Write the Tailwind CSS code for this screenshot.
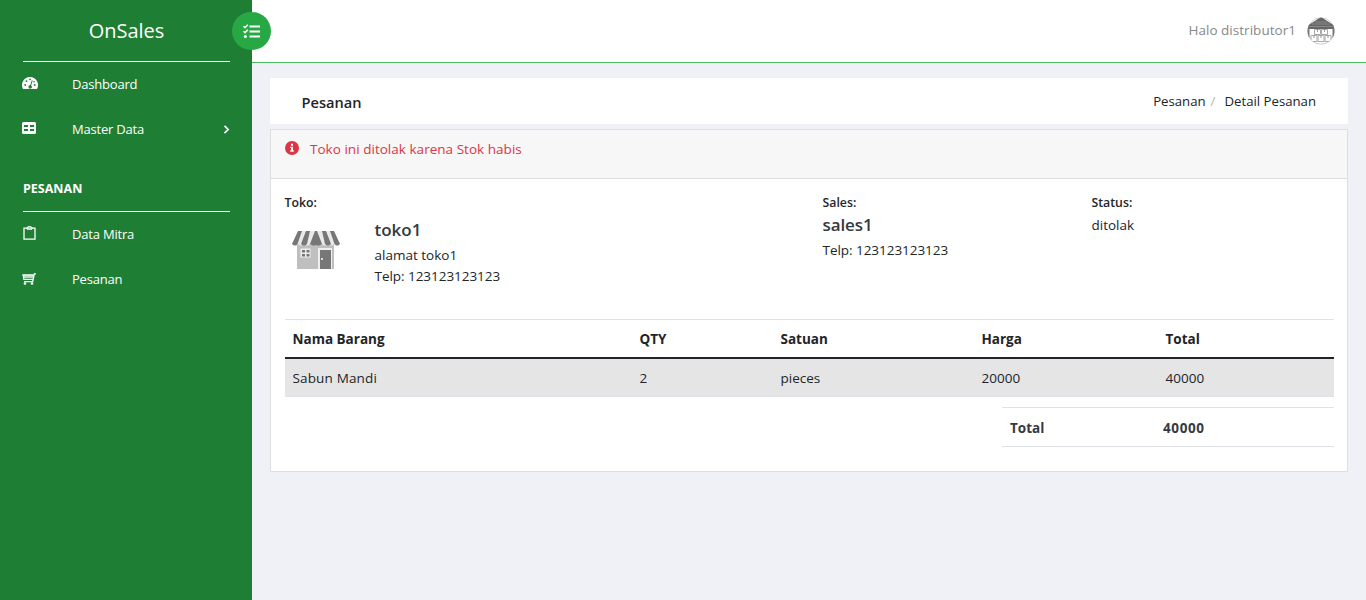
<!DOCTYPE html>
<html lang="id">
<head>
<meta charset="utf-8">
<title>OnSales</title>
<script src="https://cdn.jsdelivr.net/npm/@tailwindcss/browser@4"></script>
</head>
<body class="flex h-[600px] overflow-hidden bg-[#f0f1f7] font-['Open_Sans',sans-serif] text-[#212529]">
<aside class="relative w-[252px] shrink-0 bg-[#1e7e34] px-[23px] text-[13px] tracking-[-0.2px] text-white">
  <div class="mr-[-1px] flex h-[62px] items-center justify-center border-b border-white text-[20px] tracking-normal"><span>OnSales</span></div>
  <button class="absolute left-[232px] top-3 z-10 flex h-[38px] w-[39px] items-center justify-center rounded-full bg-[#28a745]">
    <svg class="mt-px h-[15px] w-[17px]" viewBox="0 0 17 15" fill="none" stroke="#fff" stroke-width="2"><path d="M6.5 2.5H17M6.5 7.5H17M6.5 12.5H17"/><path stroke-width="1.6" d="M.5 2.2 2 3.7 4.8.8M.5 7.2 2 8.7 4.8 5.8"/><circle cx="2.4" cy="12.5" r="1.6" fill="#fff" stroke="none"/></svg>
  </button>
  <nav class="mr-[-1px]">
    <a class="flex h-[45px] items-center"><svg class="mb-[3px] -ml-px mr-[34px] h-3 w-4" viewBox="0 0 16 12"><path fill="#fff" d="M8 0a8 8 0 0 0-7 11.9h14A8 8 0 0 0 8 0Z"/><g fill="#1e7e34"><circle cx="3.2" cy="8" r=".9"/><circle cx="4.5" cy="4.2" r=".9"/><circle cx="8" cy="2.3" r=".9"/><circle cx="12.8" cy="8" r=".9"/><circle cx="12" cy="4.8" r=".8"/><path d="m9.800 3.300.9.300-1.600 5a1.600 1.600 0 1 1-.9-.3z"/></g></svg>Dashboard</a>
    <a class="flex h-[45px] items-center"><svg class="mb-[3px] -ml-px mr-[36px] h-3 w-3.5" viewBox="0 0 14 12"><rect width="14" height="12" rx="1.5" fill="#fff"/><path fill="#1e7e34" d="M2 3h4v2H2zm6 0h4v2H8zM2 7h4v2H2zm6 0h4v2H8z"/></svg>Master Data<svg class="ml-auto h-[9px] w-[7px]" viewBox="0 0 7 9" fill="none" stroke="#fff" stroke-width="1.7"><path d="m1.5.8 3.7 3.7-3.7 3.7"/></svg></a>
    <h2 class="flex h-[60px] items-center border-b border-white pt-[15px] text-[12.5px] font-bold tracking-normal">PESANAN</h2>
    <a class="flex h-[45px] items-center"><svg class="mb-[3px] mr-[36px] h-3.5 w-[13px]" viewBox="0 0 13 14" fill="none" stroke="#fff"><path stroke-width="1.3" d="M1 2.2h11v11H1z"/><path fill="#a9cfb1" d="M4 1.2h1.3a1.2 1.2 0 0 1 2.4 0H9v2H4z"/></svg>Data Mitra</a>
    <a class="flex h-[45px] items-center"><svg class="mb-[2px] -ml-px mr-[36px] h-3 w-3.5" viewBox="0 0 14 12" fill="none" stroke="#fff" stroke-width="1.3"><path fill="#fff" fill-opacity=".7" stroke="none" d="M1 2h10.500v3H1.500z"/><path d="M.3 1.800h11M1.200 2l.7 4.300h9.200M14 .8h-1.700L10.700 8.700H2"/><circle cx="3" cy="10.500" r=".7"/><circle cx="10" cy="10.500" r=".7"/></svg>Pesanan</a>
  </nav>
</aside>
<div class="min-w-0 flex-1">
  <header class="flex h-[63px] items-center justify-end border-b border-[#4cbb63] bg-white pr-[31px] text-[13.5px] text-[#888]">
    <span class="mr-[11px] pb-px tracking-[0.03px]">Halo distributor1</span>
    <svg class="h-7 w-7" viewBox="0 0 28 28"><clipPath id="a"><circle cx="14" cy="14" r="13.5"/></clipPath><circle cx="14" cy="14" r="13.2" fill="#fff" stroke="#aaa" stroke-width=".6"/><g clip-path="url(#a)"><path fill="#666" d="M0 9 14 0l14 9v3H0z"/><path stroke="#999" stroke-width=".7" d="M8 5h12M5 7h18M2 9.5h24"/><path fill="#777" d="M0 11h2.500v10H0zm25.500 0H28v10h-2.500z"/><g fill="#fff" stroke="#aaa"><path d="M7.500 12.500h6v5h-6zM14.500 12.500h6v5h-6zM4 18.500h6v6H4zM11 18.500h6v6h-6zM18 18.500h6v6h-6z"/><path stroke="#888" stroke-width=".8" d="M10.500 12v3M17.500 12v3M7 18v3M14 18v3M21 18v3"/></g></g></svg>
  </header>
  <main class="pl-[18px] pr-[18px] pt-[15px]">
    <div class="flex h-[46px] items-center justify-between bg-white px-8">
      <h1 class="-ml-[0.5px] pt-[3px] text-[14.6px] font-semibold">Pesanan</h1>
      <div class="flex pt-[2px] text-[13.2px]"><span>Pesanan</span><span class="ml-[5px] mr-[9px] text-[#b4b8bc]">/</span><span>Detail Pesanan</span></div>
    </div>
    <section class="mt-[5px] h-[343px] border border-[#dfdfdf] bg-white text-[13.5px]">
      <div class="flex h-[49px] border-b border-[#dfdfdf] bg-[#f7f7f7] pl-[13.5px] pt-[9px] text-[#dc3545]">
        <svg class="mr-[11.5px] mt-[2px] h-3.5 w-3.5" viewBox="0 0 14 14"><circle cx="7" cy="7" r="7" fill="#dc3545"/><path fill="#fff" d="M6 2.800h2v2H6zM5.200 5.700H8v3.600h.8v1.400H5.200V9.300H6V7.100h-.8z"/></svg>
        <span class="tracking-[0.03px]">Toko ini ditolak karena Stok habis</span>
      </div>
      <div class="grid h-[140px] grid-cols-[538px_269px_1fr] pl-[13.5px] pt-[15px] leading-[21px]">
        <div>
          <div class="text-[12.3px] font-semibold leading-[18px]">Toko:</div>
          <div class="flex">
            <svg class="ml-[7px] mt-[19px] h-10 w-12" viewBox="0 0 48 40"><path fill="#bfbfbf" d="M5 12h37v26H5z"/><path fill="#e9e9e9" d="M7 0h34l7 13q-3 3-6 0-3 3-6 0-3 3-6 0-3 3-6 0-3 3-6 0-3 3-6 0-3 3-6 0-3 3-6 0z"/><g fill="#777"><path d="M6 0h4L5.500 13q-2 3-5.500 0zM14 0h4l-3 13q-3 3-6 0zM23 0h2l5 13q-3 3-6 1-3 2-6-1zM30 0h4l5 13q-3 3-6 0zM38 0h4l6 13q-3 3-5.500 0z"/></g><path fill="#eee" d="M8.500 17.500h10v9h-10zM26 17h14v21H26z"/><path fill="#777" d="M10 19h3v2.500h-3zm4.500 0h3v2.500h-3zM10 23h3v2.500h-3zm4.500 0h3v2.500h-3zM28 19h11v19H28z"/><circle cx="30" cy="28" r="1" fill="#fff"/></svg>
            <div class="ml-[35px] pt-[6px]">
              <div class="text-[17px] font-semibold leading-[23px] text-[#343a40]">toko1</div>
              <div class="pt-[4px]">alamat toko1</div>
              <div class="tracking-[-0.04px]">Telp: 123123123123</div>
            </div>
          </div>
        </div>
        <div>
          <div class="text-[12.3px] font-semibold leading-[18px]">Sales:</div>
          <div class="pt-[1px] text-[17px] font-semibold leading-[23px] tracking-[-0.1px] text-[#343a40]">sales1</div>
          <div class="pt-[4px] tracking-[-0.04px]">Telp: 123123123123</div>
        </div>
        <div>
          <div class="text-[12.3px] font-semibold leading-[18px]">Status:</div>
          <div class="pt-[3px]">ditolak</div>
        </div>
      </div>
      <div class="ml-3.5 mr-[13px]">
        <div class="grid h-10 grid-cols-[347px_141px_201px_184px_1fr] items-center border-b-2 border-t border-b-[#212529] border-t-[#dee2e6] pl-[7.5px] pt-px font-bold">
          <span>Nama Barang</span><span>QTY</span><span>Satuan</span><span>Harga</span><span>Total</span>
        </div>
        <div class="grid h-[38px] grid-cols-[347px_141px_201px_184px_1fr] items-center border-b border-[#dee2e6] bg-[#e5e5e5] pl-[7.5px] pt-[2px]">
          <span class="tracking-[0.15px]">Sabun Mandi</span><span>2</span><span>pieces</span><span>20000</span><span>40000</span>
        </div>
        <div class="ml-auto mt-[10px] grid h-10 w-[332px] grid-cols-[153px_1fr] items-center border-y border-[#dee2e6] pl-2 pt-[2px] font-bold text-[#343a40]">
          <span>Total</span><span class="tracking-[0.6px]">40000</span>
        </div>
      </div>
    </section>
  </main>
</div>
</body>
</html>
